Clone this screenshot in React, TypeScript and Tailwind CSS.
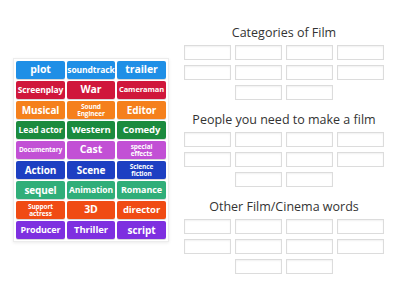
type Item = [string, string];

const ROWS: { color: string; items: Item[] }[] = [
  { color: 'bg-[#1f8fe6]', items: [['plot', 'text-[10.5px]'], ['soundtrack', 'text-[8.5px]'], ['trailer', 'text-[10.5px]']] },
  { color: 'bg-[#d0173b]', items: [['Screenplay', 'text-[8.5px]'], ['War', 'text-[10.5px]'], ['Cameraman', 'text-[7.5px]']] },
  { color: 'bg-[#f5801c]', items: [['Musical', 'text-[10px]'], ['Sound\nEngineer', 'text-[6.5px] leading-[7.5px]'], ['Editor', 'text-[10px]']] },
  { color: 'bg-[#1b8b3e]', items: [['Lead actor', 'text-[8.5px]'], ['Western', 'text-[9.5px]'], ['Comedy', 'text-[9.5px]']] },
  { color: 'bg-[#c250d5]', items: [['Documentary', 'text-[6.5px]'], ['Cast', 'text-[10.5px]'], ['special\neffects', 'text-[6.5px] leading-[7.5px]']] },
  { color: 'bg-[#1d3fc2]', items: [['Action', 'text-[10px]'], ['Scene', 'text-[10px]'], ['Science\nfiction', 'text-[6.5px] leading-[7.5px]']] },
  { color: 'bg-[#30ae79]', items: [['sequel', 'text-[10px]'], ['Animation', 'text-[8.5px]'], ['Romance', 'text-[9px]']] },
  { color: 'bg-[#f04b14]', items: [['Support\nactress', 'text-[6.5px] leading-[7.5px]'], ['3D', 'text-[10.5px]'], ['director', 'text-[9.5px]']] },
  { color: 'bg-[#7e30e0]', items: [['Producer', 'text-[9px]'], ['Thriller', 'text-[9.5px]'], ['script', 'text-[10px]']] },
];

const SECTIONS = ['Categories of Film', 'People you need to make a film', 'Other Film/Cinema words'];

function Tile({ label, size, color }: { label: string; size: string; color: string }) {
  return (
    <div
      className={`${color} ${size} h-[18px] px-[1px] rounded-[2px] flex items-center justify-center text-center whitespace-pre-line text-white font-bold tracking-[-0.1px] shadow-[0_1px_0_rgba(0,0,0,0.15)] overflow-hidden`}
    >
      {label}
    </div>
  );
}

function Slot() {
  return <div className="w-[47px] h-[15px] bg-white border border-[#dcdcdc] shadow-[inset_0_1px_2px_rgba(0,0,0,0.06)]" />;
}

export default function App() {
  return (
    <div className="w-[400px] h-[300px] bg-white flex font-['Open_Sans',sans-serif]">
      {/* Word bank */}
      <div className="ml-[13px] mt-[58px] self-start border border-[#ececec] shadow-[0_1px_3px_rgba(0,0,0,0.08)] p-[2px]">
        <div className="grid grid-cols-[49px_48px_49px] gap-[2px]">
          {ROWS.map((row) =>
            row.items.map(([label, size]) => (
              <Tile key={label} label={label} size={size} color={row.color} />
            )),
          )}
        </div>
      </div>

      {/* Drop zones */}
      <div className="ml-[15px] mt-[24px] w-[200px] flex flex-col gap-[11px]">
        {SECTIONS.map((title) => (
          <div key={title} className="flex flex-col items-center">
            <div className="h-[17px] mb-[4px] text-[12.5px] leading-[17px] text-[#333]">{title}</div>
            <div className="grid grid-cols-[47px_47px_47px_47px] gap-x-[4px] gap-y-[5px]">
              <Slot /><Slot /><Slot /><Slot />
              <Slot /><Slot /><Slot /><Slot />
            </div>
            <div className="flex gap-[4px] mt-[5px]">
              <Slot /><Slot />
            </div>
          </div>
        ))}
      </div>
    </div>
  );
}
